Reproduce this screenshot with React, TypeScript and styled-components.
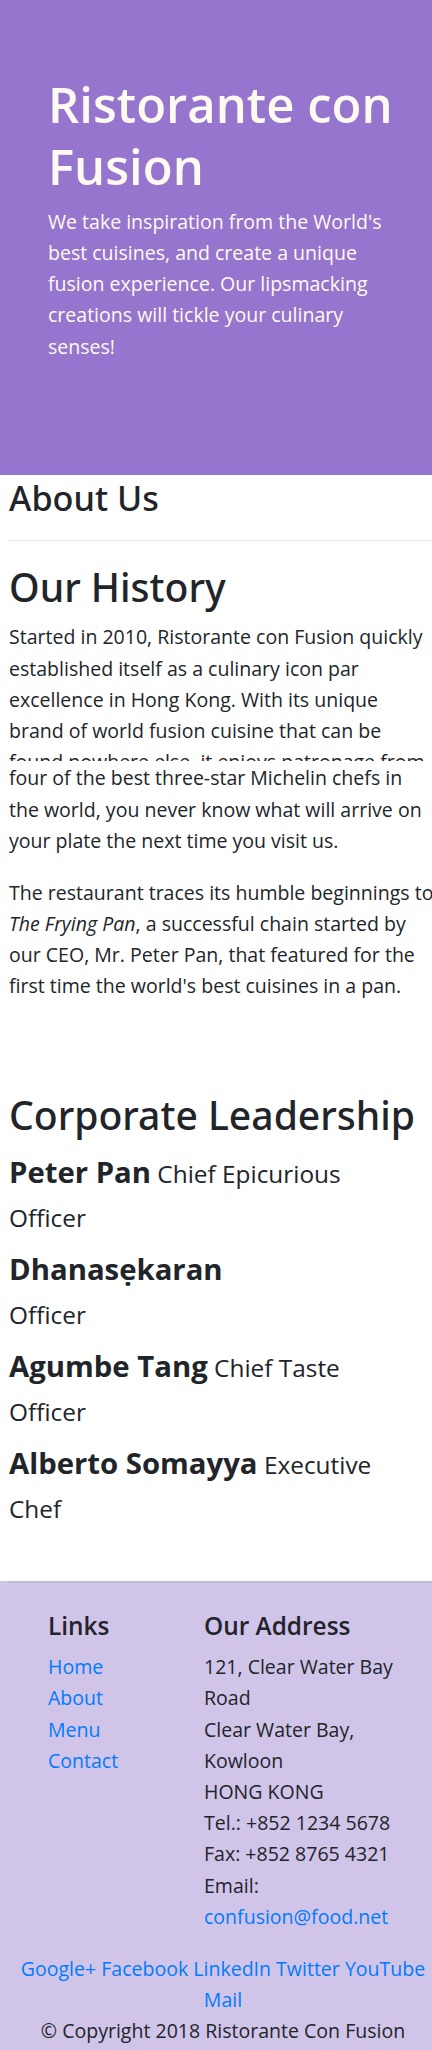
import React from "react";
import styled, { createGlobalStyle } from "styled-components";

const GlobalStyle = createGlobalStyle`
  html, body {
    margin: 0;
    padding: 0;
    overflow-x: hidden;
    background: #ffffff;
  }
  body {
    font-family: "Open Sans", "Noto Sans", sans-serif;
    color: #212529;
  }
  * { box-sizing: border-box; }
`;

const Page = styled.div`
  width: 446px;
  font-size: 19.55px;
  line-height: 31.2px;
`;

const Hero = styled.header`
  background: #9575cd;
  color: floralwhite;
  padding: 73px 0 113px 48px;
`;

const HeroTitle = styled.h1`
  font-size: 49px;
  font-weight: 600;
  line-height: 62.4px;
  margin: 0 0 8px;
  white-space: nowrap;
`;

const HeroText = styled.p`
  margin: 0;
  white-space: nowrap;
`;

const Main = styled.main`
  padding: 0 9px;
`;

const PageTitle = styled.h3`
  font-family: "Noto Sans", "Open Sans", sans-serif;
  font-size: 34.2px;
  font-weight: 500;
  line-height: 43.7px;
  margin: 1px 0 0;
`;

const Rule = styled.hr`
  border: 0;
  border-top: 1px solid rgba(0, 0, 0, 0.1);
  margin: 20px 0 21px;
`;

const SectionTitle = styled.h2<{ $gap?: number }>`
  font-family: "Noto Sans", "Open Sans", sans-serif;
  font-size: 39.1px;
  font-weight: 500;
  line-height: 49.9px;
  margin: ${(p) => p.$gap ?? 0}px 0 10px;
  white-space: nowrap;
`;

const ClippedText = styled.p`
  margin: 0;
  height: 140px;
  overflow: hidden;
  white-space: nowrap;
`;

const Text = styled.p`
  margin: 1px 0 20.8px;
  white-space: nowrap;
`;

const Leader = styled.div`
  font-size: 24.4px;
  line-height: 44px;
  margin-bottom: 7px;
  white-space: nowrap;
`;

const LeaderName = styled.span`
  font-size: 29.3px;
  font-weight: 700;
`;

const Footer = styled.footer`
  background: #d1c4e9;
  margin-top: 50px;
  padding-bottom: 20px;
`;

const FooterRule = styled.div`
  height: 2px;
  margin-left: 9px;
  background: #c2bccb;
`;

const FooterColumns = styled.div`
  display: grid;
  grid-template-columns: 156px 1fr;
  padding: 27px 0 0 48px;
`;

const FooterHeading = styled.h5`
  font-size: 24.4px;
  font-weight: 600;
  line-height: 31.2px;
  margin: 0 0 10.4px;
`;

const LinkList = styled.ul`
  list-style: none;
  margin: 0;
  padding: 0;
`;

const FooterLink = styled.a`
  color: #007bff;
  text-decoration: none;
`;

const Address = styled.address`
  font-style: normal;
  margin: 0 0 20.8px;
  white-space: nowrap;
`;

const Social = styled.div`
  text-align: center;
  white-space: nowrap;
`;

const Copyright = styled.p`
  margin: 0;
  text-align: center;
  white-space: nowrap;
`;

const leaders = [
  { name: "Peter Pan", first: " Chief Epicurious", rest: "Officer" },
  { name: "Dhanasẹkaran", first: "", rest: "Officer" },
  { name: "Agumbe Tang", first: " Chief Taste", rest: "Officer" },
  { name: "Alberto Somayya", first: " Executive", rest: "Chef" },
];

const links = ["Home", "About", "Menu", "Contact"];
const socials = ["Google+", "Facebook", "LinkedIn", "Twitter", "YouTube"];

export default function App() {
  return (
    <Page>
      <GlobalStyle />
      <Hero>
        <HeroTitle>
          Ristorante con
          <br />
          Fusion
        </HeroTitle>
        <HeroText>
          We take inspiration from the World's
          <br />
          best cuisines, and create a unique
          <br />
          fusion experience. Our lipsmacking
          <br />
          creations will tickle your culinary
          <br />
          senses!
        </HeroText>
      </Hero>
      <Main>
        <PageTitle>About Us</PageTitle>
        <Rule />
        <SectionTitle>Our History</SectionTitle>
        <ClippedText>
          Started in 2010, Ristorante con Fusion quickly
          <br />
          established itself as a culinary icon par
          <br />
          excellence in Hong Kong. With its unique
          <br />
          brand of world fusion cuisine that can be
          <br />
          found nowhere else, it enjoys patronage from
        </ClippedText>
        <Text>
          four of the best three-star Michelin chefs in
          <br />
          the world, you never know what will arrive on
          <br />
          your plate the next time you visit us.
        </Text>
        <Text>
          The restaurant traces its humble beginnings to
          <br />
          <em>The Frying Pan</em>, a successful chain started by
          <br />
          our CEO, Mr. Peter Pan, that featured for the
          <br />
          first time the world's best cuisines in a pan.
        </Text>
        <SectionTitle $gap={88}>Corporate Leadership</SectionTitle>
        {leaders.map((l) => (
          <Leader key={l.name}>
            <LeaderName>{l.name}</LeaderName>
            {l.first}
            <br />
            {l.rest}
          </Leader>
        ))}
      </Main>
      <Footer>
        <FooterRule />
        <FooterColumns>
          <div>
            <FooterHeading>Links</FooterHeading>
            <LinkList>
              {links.map((t) => (
                <li key={t}>
                  <FooterLink href="#">{t}</FooterLink>
                </li>
              ))}
            </LinkList>
          </div>
          <div>
            <FooterHeading>Our Address</FooterHeading>
            <Address>
              121, Clear Water Bay
              <br />
              Road
              <br />
              Clear Water Bay,
              <br />
              Kowloon
              <br />
              HONG KONG
              <br />
              Tel.: +852 1234 5678
              <br />
              Fax: +852 8765 4321
              <br />
              Email:
              <br />
              <FooterLink href="#">confusion@food.net</FooterLink>
            </Address>
          </div>
        </FooterColumns>
        <Social>
          {socials.map((s, i) => (
            <React.Fragment key={s}>
              <FooterLink href="#">{s}</FooterLink>
              {i < socials.length - 1 ? " " : ""}
            </React.Fragment>
          ))}
          <br />
          <FooterLink href="#">Mail</FooterLink>
        </Social>
        <Copyright>© Copyright 2018 Ristorante Con Fusion</Copyright>
      </Footer>
    </Page>
  );
}
